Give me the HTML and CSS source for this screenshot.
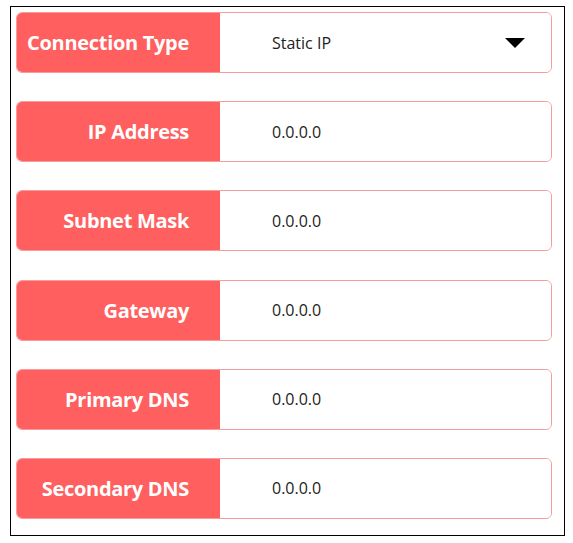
FILE: index.html
```html
<!DOCTYPE html>
<html lang="en">
<head>
    <meta charset="UTF-8">
    <meta name="viewport" content="width=device-width, initial-scale=1.0">
    <title>Internet Settings</title>
    <link rel="stylesheet" href="styles.css">
</head>
<body>
    <div class="panel">
        <div class="field">
            <label class="field-label">Connection Type</label>
            <div class="field-value select">
                <span>Static IP</span>
                <span class="arrow"></span>
            </div>
        </div>
        <div class="field">
            <label class="field-label">IP Address</label>
            <div class="field-value">0.0.0.0</div>
        </div>
        <div class="field">
            <label class="field-label">Subnet Mask</label>
            <div class="field-value">0.0.0.0</div>
        </div>
        <div class="field">
            <label class="field-label">Gateway</label>
            <div class="field-value">0.0.0.0</div>
        </div>
        <div class="field">
            <label class="field-label">Primary DNS</label>
            <div class="field-value">0.0.0.0</div>
        </div>
        <div class="field">
            <label class="field-label">Secondary DNS</label>
            <div class="field-value">0.0.0.0</div>
        </div>
    </div>
</body>
</html>
```

FILE: styles.css
```css
* {
    box-sizing: border-box;
    margin: 0;
    padding: 0;
}

body {
    background: #fff;
    font-family: "Open Sans", "Noto Sans", sans-serif;
}

.panel {
    width: 555px;
    height: 530px;
    margin: 6px 0 0 10px;
    padding: 5px 12px 0 5px;
    border: 1px solid #000;
    display: flex;
    flex-direction: column;
    gap: 28.2px;
}

.field {
    display: flex;
    height: 61px;
    border: 1px solid #f59c9c;
    border-radius: 6px;
    overflow: hidden;
}

.field-label {
    width: 203px;
    flex-shrink: 0;
    background: #ff5f5f;
    color: #fff;
    font-weight: 700;
    font-size: 20px;
    letter-spacing: -0.3px;
    padding-right: 31px;
    display: flex;
    align-items: center;
    justify-content: flex-end;
}

.field-value {
    flex: 1;
    display: flex;
    align-items: center;
    padding-left: 52px;
    font-size: 16px;
    color: #222;
    background: #fff;
}

.select {
    justify-content: space-between;
    padding-right: 26px;
}

.arrow {
    width: 0;
    height: 0;
    border-left: 10px solid transparent;
    border-right: 10px solid transparent;
    border-top: 10px solid #000;
}
```
